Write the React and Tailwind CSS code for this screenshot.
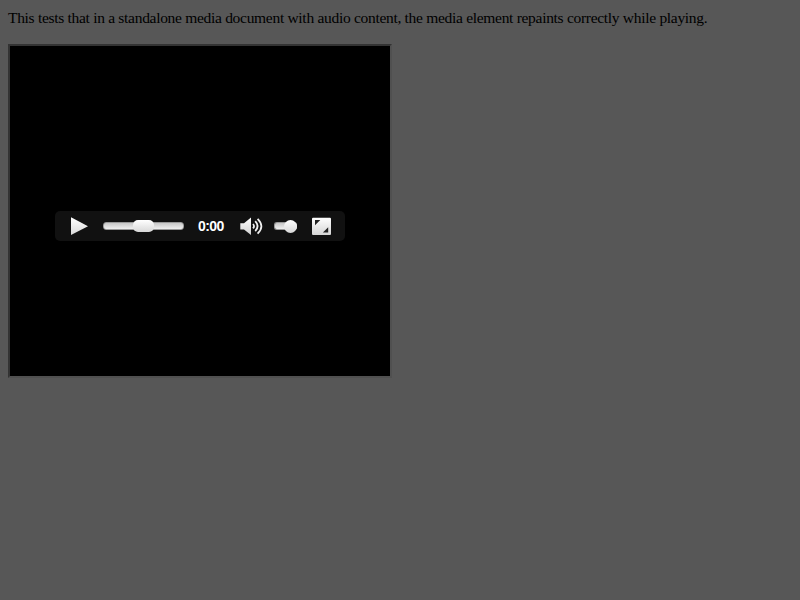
function PlayIcon() {
  return (
    <svg className="ml-4 h-[18px] w-[17px] shrink-0" viewBox="0 0 17 18">
      <defs>
        <linearGradient id="play" x2="0" y2="1">
          <stop stopColor="#fff" />
          <stop offset="1" stopColor="#d8d8d8" />
        </linearGradient>
      </defs>
      <path d="M0 0.3 17 9.3 0 18Z" fill="url(#play)" />
    </svg>
  );
}

function SpeakerIcon() {
  return (
    <svg className="h-[18px] w-[24px] shrink-0" viewBox="0 0 24 18">
      <defs>
        <linearGradient id="speaker" x2="0" y2="1">
          <stop stopColor="#fff" />
          <stop offset="1" stopColor="#d0d0d0" />
        </linearGradient>
      </defs>
      <path d="M0.3 6.3H4L11 0.5V18L4 12.4H0.3Z" fill="url(#speaker)" />
      <g fill="none" stroke="#f0f0f0" strokeWidth="1.8">
        <path d="M13 7Q15 9.2 13 11.4" />
        <path d="M15.2 4.2Q20 9.2 15.2 14.2" />
        <path d="M17.6 1.8Q25.2 9.2 17.6 16.6" />
      </g>
    </svg>
  );
}

function FullscreenIcon() {
  return (
    <svg className="ml-[14px] h-[18px] w-[19px] shrink-0" viewBox="0 0 19 18">
      <defs>
        <linearGradient id="screen" x2="0" y2="1">
          <stop stopColor="#fff" />
          <stop offset="1" stopColor="#d5d5d5" />
        </linearGradient>
      </defs>
      <rect y="0.7" width="19" height="17.3" rx="1" fill="url(#screen)" />
      <path d="M3 3H8.3L3 8.3ZM16.2 10.3V15.6H10.9Z" fill="#222" />
    </svg>
  );
}

function Controls() {
  return (
    <div className="flex h-[30px] w-[290px] items-center rounded-[5px] bg-[#111]">
      <PlayIcon />
      <div className="ml-[15px] flex h-2 w-[81px] items-center justify-center rounded-[3px] border border-[#999] bg-linear-to-b from-[#c8c8c8] to-[#f0f0f0]">
        <div className="h-3 w-[21px] shrink-0 rounded-[5px] bg-linear-to-b from-white to-[#d8d8d8]" />
      </div>
      <div className="ml-3.5 w-[42px] whitespace-nowrap font-['Liberation_Sans',sans-serif] text-[14px] font-bold leading-4 tracking-[-0.6px] text-white">
        0:00
      </div>
      <SpeakerIcon />
      <div className="ml-[10px] flex h-2 w-[23px] shrink-0 items-center justify-end rounded-[3px] border border-r-0 border-[#999] bg-linear-to-b from-[#c8c8c8] to-[#f0f0f0]">
        <div className="size-[13px] shrink-0 rounded-full bg-linear-to-b from-white to-[#d8d8d8]" />
      </div>
      <div className="w-px" />
      <FullscreenIcon />
    </div>
  );
}

export default function App() {
  return (
    <main className="h-screen overflow-hidden bg-[#575757] px-2 pt-2">
      <p className="h-5 whitespace-nowrap font-['Liberation_Serif',serif] text-[15.5px] leading-[19px] tracking-[-0.3px] text-black">
        This tests that in a standalone media document with audio content, the media element repaints correctly while playing.
      </p>
      <div className="mt-4 flex h-[334px] w-[384px] justify-center border-2 border-t-[#333] border-r-[#505050] border-b-[#505050] border-l-[#333] bg-black pt-[165px]">
        <Controls />
      </div>
    </main>
  );
}
